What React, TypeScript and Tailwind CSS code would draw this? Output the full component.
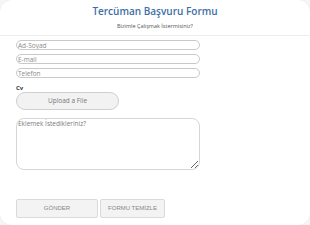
export default function App() {
  return (
    <div className="w-[310px] h-[225px] bg-[#f6f6f6] overflow-hidden">
      <div className="w-full h-full bg-white rounded-[12px] shadow-[0_0_2px_rgba(0,0,0,0.08)] flex flex-col" style={{ fontFamily: '"Open Sans", "Noto Sans", sans-serif' }}>
        {/* Header */}
        <div className="flex flex-col items-center pt-[3px] pb-[5px] border-b border-[#eeeeee]">
          <h1 className="text-[10px] leading-[17px] font-semibold text-[#3d6ea6]">Tercüman Başvuru Formu</h1>
          <p className="text-[5.5px] leading-[8px] text-[#555] mt-[2px]">Bizimle Çalışmak İstermisiniz?</p>
        </div>

        {/* Form */}
        <div className="flex flex-col px-[16px] pt-[4px]">
          <input
            type="text"
            placeholder="Ad-Soyad"
            className="w-[184px] h-[10px] border border-[#c9c9c9] rounded-full px-[1px] text-[6.5px] leading-[8px] placeholder:text-[#8a8a8a] outline-none"
          />
          <input
            type="email"
            placeholder="E-mail"
            className="w-[184px] h-[10px] border border-[#c9c9c9] rounded-full px-[1px] text-[6.5px] leading-[8px] placeholder:text-[#8a8a8a] outline-none mt-[4px]"
          />
          <input
            type="text"
            placeholder="Telefon"
            className="w-[184px] h-[10px] border border-[#c9c9c9] rounded-full px-[1px] text-[6.5px] leading-[8px] placeholder:text-[#8a8a8a] outline-none mt-[4px]"
          />

          <label className="text-[6px] leading-[8px] font-bold text-[#333] mt-[6px]">Cv</label>
          <button className="w-[103px] h-[18px] bg-[#f2f2f2] border border-[#cfcfcf] rounded-[9px] text-[6.5px] text-[#777]">
            Upload a File
          </button>

          <textarea
            placeholder="Eklemek İstedikleriniz?"
            className="w-[184px] h-[52px] mt-[8px] border border-[#d6d6d6] rounded-[8px] px-[1px] py-0 text-[6.5px] leading-[9px] placeholder:text-[#7a7a7a] outline-none resize"
          />
        </div>

        {/* Buttons */}
        <div className="flex gap-[2px] px-[16px] mt-[29px]" style={{ fontFamily: '"Liberation Sans", Arial, sans-serif' }}>
          <button className="w-[82px] h-[19px] bg-[#f3f3f3] border border-[#dadada] rounded-[2px] text-[6px] font-normal text-[#888] uppercase">
            Gönder
          </button>
          <button className="w-[65px] h-[19px] bg-[#f3f3f3] border border-[#dadada] rounded-[2px] text-[6px] font-normal text-[#888]">
            FORMU TEMİZLE
          </button>
        </div>
      </div>
    </div>
  );
}
